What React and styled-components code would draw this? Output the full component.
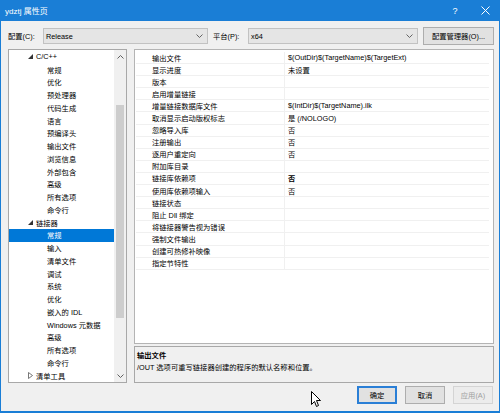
import React from 'react'
import styled, { createGlobalStyle } from 'styled-components'

const GlobalStyle = createGlobalStyle`
  html, body {
    margin: 0;
    padding: 0;
    background: #f0f0f0;
  }
  * {
    box-sizing: border-box;
  }
`

const treeItems = [
  { label: 'C/C++', level: 1, arrow: 'open' },
  { label: '常规', level: 2 },
  { label: '优化', level: 2 },
  { label: '预处理器', level: 2 },
  { label: '代码生成', level: 2 },
  { label: '语言', level: 2 },
  { label: '预编译头', level: 2 },
  { label: '输出文件', level: 2 },
  { label: '浏览信息', level: 2 },
  { label: '外部包含', level: 2 },
  { label: '高级', level: 2 },
  { label: '所有选项', level: 2 },
  { label: '命令行', level: 2 },
  { label: '链接器', level: 1, arrow: 'open' },
  { label: '常规', level: 2, selected: true },
  { label: '输入', level: 2 },
  { label: '清单文件', level: 2 },
  { label: '调试', level: 2 },
  { label: '系统', level: 2 },
  { label: '优化', level: 2 },
  { label: '嵌入的 IDL', level: 2 },
  { label: 'Windows 元数据', level: 2 },
  { label: '高级', level: 2 },
  { label: '所有选项', level: 2 },
  { label: '命令行', level: 2 },
  { label: '清单工具', level: 1, arrow: 'closed' },
]

const props = [
  ['输出文件', '$(OutDir)$(TargetName)$(TargetExt)'],
  ['显示进度', '未设置'],
  ['版本', ''],
  ['启用增量链接', ''],
  ['增量链接数据库文件', '$(IntDir)$(TargetName).ilk'],
  ['取消显示启动版权标志', '是 (/NOLOGO)'],
  ['忽略导入库', '否'],
  ['注册输出', '否'],
  ['逐用户重定向', '否'],
  ['附加库目录', ''],
  ['链接库依赖项', '否', true],
  ['使用库依赖项输入', '否'],
  ['链接状态', ''],
  ['阻止 Dll 绑定', ''],
  ['将链接器警告视为错误', ''],
  ['强制文件输出', ''],
  ['创建可热修补映像', ''],
  ['指定节特性', ''],
]

export default function App() {
  return (
    <>
      <GlobalStyle />
      <Window>
        <TitleBar>
          <Title>ydztj 属性页</Title>
          <TitleButtons>
            <TitleBtn>?</TitleBtn>
            <TitleBtn>
              <svg width="9" height="9" viewBox="0 0 9 9">
                <path d="M0.5 0.5 L8.5 8.5 M8.5 0.5 L0.5 8.5" stroke="#fff" strokeWidth="1" />
              </svg>
            </TitleBtn>
          </TitleButtons>
        </TitleBar>
        <Body>
          <ConfigRow>
            <Label>配置(C):</Label>
            <Combo width={165}>
              <span>Release</span>
              <Chevron />
            </Combo>
            <Label style={{ marginLeft: 5 }}>平台(P):</Label>
            <Combo width={170}>
              <span>x64</span>
              <Chevron />
            </Combo>
            <Button width={71} style={{ marginLeft: 5 }}>配置管理器(O)...</Button>
          </ConfigRow>
          <Main>
            <Tree>
              <TreeList>
                {treeItems.map((it, i) => (
                  <TreeRow key={i} selected={it.selected}>
                    <TreeIndent level={it.level}>
                      {it.arrow === 'open' && (
                        <svg width="5" height="5" viewBox="0 0 5 5">
                          <polygon points="5,0 5,5 0,5" fill="#333" />
                        </svg>
                      )}
                      {it.arrow === 'closed' && (
                        <svg width="5" height="7" viewBox="0 0 5 7">
                          <polygon points="0.5,0.5 4.5,3.5 0.5,6.5" fill="none" stroke="#555" strokeWidth="0.8" />
                        </svg>
                      )}
                    </TreeIndent>
                    <span>{it.label}</span>
                  </TreeRow>
                ))}
              </TreeList>
              <ScrollBar>
                <ScrollArrow>
                  <svg width="7" height="4" viewBox="0 0 7 4">
                    <path d="M0.5 3.5 L3.5 0.5 L6.5 3.5" fill="none" stroke="#606060" strokeWidth="1" />
                  </svg>
                </ScrollArrow>
                <ScrollTrack>
                  <Thumb />
                </ScrollTrack>
                <ScrollArrow>
                  <svg width="7" height="4" viewBox="0 0 7 4">
                    <path d="M0.5 0.5 L3.5 3.5 L6.5 0.5" fill="none" stroke="#606060" strokeWidth="1" />
                  </svg>
                </ScrollArrow>
              </ScrollBar>
            </Tree>
            <RightPane>
              <Grid>
                {props.map(([name, value, bold], i) => (
                  <GridRow key={i}>
                    <NameCell>{name}</NameCell>
                    <ValueCell bold={bold}>{value}</ValueCell>
                  </GridRow>
                ))}
              </Grid>
              <Description>
                <DescTitle>输出文件</DescTitle>
                <div>/OUT 选项可重写链接器创建的程序的默认名称和位置。</div>
              </Description>
            </RightPane>
          </Main>
          <Footer>
            <Button width={40} primary>确定</Button>
            <Button width={40}>取消</Button>
            <Button width={40} disabled>应用(A)</Button>
          </Footer>
        </Body>
        <Cursor>
          <svg width="11" height="17" viewBox="0 0 11 17">
            <path d="M0.5 0.5 L0.5 13.5 L3.5 10.5 L5.5 15.5 L7.5 14.5 L5.5 9.5 L9.5 9.5 Z" fill="#fff" stroke="#000" strokeWidth="1" strokeLinejoin="round" />
          </svg>
        </Cursor>
      </Window>
    </>
  )
}

function Chevron() {
  return (
    <svg width="7" height="4" viewBox="0 0 7 4">
      <path d="M0.5 0.5 L3.5 3.5 L6.5 0.5" fill="none" stroke="#555" strokeWidth="0.9" />
    </svg>
  )
}

const Window = styled.div`
  position: relative;
  width: 500px;
  height: 413px;
  background: #f0f0f0;
  border: 1px solid #1a7ed6;
  border-top: none;
  border-bottom-width: 2px;
  display: flex;
  flex-direction: column;
  font-family: "Liberation Sans", "Noto Sans CJK SC", sans-serif;
  font-size: 7.3px;
  color: #000;
`
const TitleBar = styled.div`
  height: 21px;
  margin: 0 -1px;
  background: #1a7ed6;
  display: flex;
  align-items: center;
  justify-content: space-between;
  padding: 0 0 0 5px;
  color: #fff;
`
const Title = styled.div`
  font-size: 8px;
`
const TitleButtons = styled.div`
  display: flex;
  align-items: center;
`
const TitleBtn = styled.div`
  width: 30px;
  height: 21px;
  display: flex;
  align-items: center;
  justify-content: center;
  font-size: 9px;
`
const Body = styled.div`
  flex: 1;
  display: flex;
  flex-direction: column;
  padding: 7px 5px 0 7px;
`
const ConfigRow = styled.div`
  display: flex;
  align-items: center;
  height: 16px;
`
const Label = styled.div`
  width: 35px;
  flex-shrink: 0;
`
const Combo = styled.div`
  width: ${p => p.width}px;
  height: 16px;
  background: #e5e5e5;
  border: 1px solid #c2c2c2;
  display: flex;
  align-items: center;
  justify-content: space-between;
  padding: 0 4px 0 2px;
`
const Button = styled.div`
  width: ${p => p.width}px;
  height: 18px;
  background: ${p => (p.disabled ? '#ececec' : '#e1e1e1')};
  border: 1px solid ${p => (p.primary ? '#2a7fd6' : p.disabled ? '#d4d4d4' : '#adadad')};
  box-shadow: ${p => (p.primary ? 'inset 0 0 0 1px #2a7fd6' : 'none')};
  color: ${p => (p.disabled ? '#a0a0a0' : '#000')};
  display: flex;
  align-items: center;
  justify-content: center;
  flex-shrink: 0;
`
const Main = styled.div`
  display: flex;
  gap: 7px;
  height: 334px;
  margin-top: 5px;
`
const Tree = styled.div`
  width: 119px;
  background: #fff;
  border: 1px solid #a8a8a8;
  display: flex;
`
const TreeList = styled.div`
  flex: 1;
  padding-top: 0.5px;
  overflow: hidden;
`
const TreeRow = styled.div`
  height: 12.75px;
  display: flex;
  align-items: center;
  white-space: nowrap;
  background: ${p => (p.selected ? '#0078d7' : 'transparent')};
  color: ${p => (p.selected ? '#fff' : '#000')};
`
const TreeIndent = styled.div`
  width: ${p => (p.level === 1 ? 27 : 38)}px;
  flex-shrink: 0;
  display: flex;
  justify-content: flex-end;
  align-items: center;
  padding-right: ${p => (p.level === 1 ? 3 : 0)}px;
`
const ScrollBar = styled.div`
  width: 12px;
  background: #f0f0f0;
  display: flex;
  flex-direction: column;
`
const ScrollArrow = styled.div`
  height: 13px;
  display: flex;
  align-items: center;
  justify-content: center;
`
const ScrollTrack = styled.div`
  flex: 1;
  padding: 42px 2px 0 2px;
`
const Thumb = styled.div`
  height: 213px;
  background: #cdcdcd;
`
const RightPane = styled.div`
  flex: 1;
  display: flex;
  flex-direction: column;
  gap: 2px;
`
const Grid = styled.div`
  flex: 1;
  background: #fff;
  border: 1px solid #b4b4b4;
  padding: 2px 4px 0 1px;
`
const GridRow = styled.div`
  height: 12.1px;
  display: flex;
  align-items: center;
  border-bottom: 1px solid #f0f0f0;
  white-space: nowrap;
`
const NameCell = styled.div`
  width: 149px;
  height: 100%;
  display: flex;
  align-items: center;
  padding-left: 16px;
  border-right: 1px solid #f0f0f0;
`
const ValueCell = styled.div`
  padding-left: 3px;
  font-weight: ${p => (p.bold ? 'bold' : 'normal')};
`
const Description = styled.div`
  height: 37px;
  background: #f0f0f0;
  border: 1px solid #a8a8a8;
  padding: 3px 2px;
  line-height: 12px;
`
const DescTitle = styled.div`
  font-weight: bold;
`
const Footer = styled.div`
  display: flex;
  justify-content: flex-end;
  gap: 8px;
  margin-top: 3px;
  padding-right: 1px;
`
const Cursor = styled.div`
  position: absolute;
  left: 310px;
  top: 391px;
  width: 11px;
  height: 17px;
`
